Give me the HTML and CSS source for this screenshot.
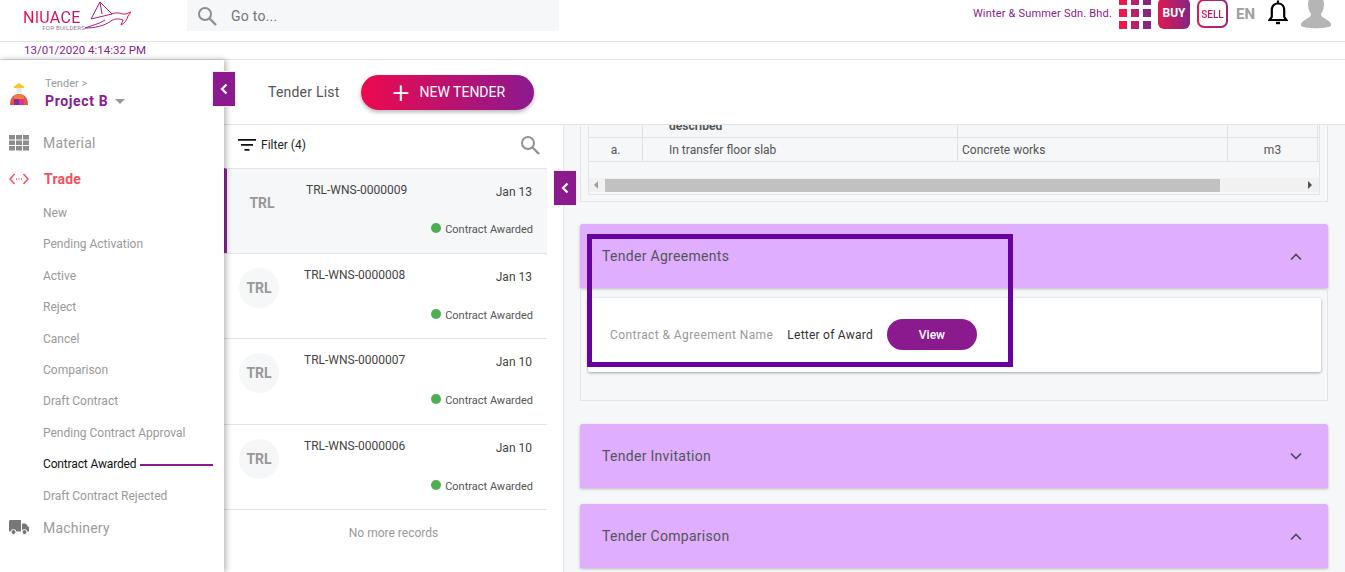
FILE: index.html
```html
<!DOCTYPE html>
<html>
<head>
<meta charset="utf-8" />
<title>Tender List</title>
<link rel="stylesheet" href="styles.css">
</head>
<body>

<header class="topbar">
  <div class="logo">
    <div class="logo-words">
      <span class="logo-name">NIUACE</span>
      <span class="logo-sub">FOR BUILDERS</span>
    </div>
    <svg class="logo-mark" width="46" height="30" viewBox="0 0 46 30" fill="none">
      <defs>
        <linearGradient id="logoGrad" x1="0" x2="1" y1="0" y2="0">
          <stop offset="0" stop-color="#8b1a8f"/>
          <stop offset=".5" stop-color="#b01a70"/>
          <stop offset="1" stop-color="#e8114f"/>
        </linearGradient>
      </defs>
      <path d="M6 19 L15 2 L27 14 L6 19 M15 2 L17 14 M27 14 C33 11 37 15 41 14 L46 12 L43 16 C42 20 40 23 36 25 L38 20 C33 18 29 19 26 21 C19 26 10 28 0 28 C8 25 14 24 20 20" stroke="url(#logoGrad)" stroke-width="1"/>
    </svg>
  </div>
  <div class="goto">
    <svg width="24" height="24" viewBox="0 0 24 24" fill="none" stroke="#8a8f94" stroke-width="2"><circle cx="10" cy="10" r="6"/><path d="M14.500 14.500 21 21" stroke-width="2.400"/></svg>
    <span>Go to...</span>
  </div>
  <div class="top-right">
    <span class="company">Winter &amp; Summer Sdn. Bhd.</span>
    <div class="apps">
      <i class="c1"></i><i class="c2"></i><i class="c3"></i>
      <i class="c1"></i><i class="c2"></i><i class="c3"></i>
      <i class="c1"></i><i class="c2"></i><i class="c3"></i>
    </div>
    <span class="buy">BUY</span>
    <span class="sell"><b><em>SELL</em></b></span>
    <span class="lang">EN</span>
    <svg class="bell" width="20" height="25" viewBox="0 0 20 25" fill="none" stroke="#000" stroke-width="2.200">
      <path d="M1.500 20h17l-2.300-3V10c0-3.800-2.400-6.500-6.200-6.500S3.800 6.200 3.800 10v7z"/>
      <path d="M10 .5v3" />
      <path d="M8 23h4" stroke-width="2.400"/>
    </svg>
    <svg class="avatar" width="30" height="29" viewBox="0 0 30 29" fill="#b5b5b5">
      <path d="M15 -4c-5 0-8 3-8 8 0 4 1 7 3 10 0 2-1 3-3 4-3 2-6 3-7 6v2c5 3 25 3 30 0v-2c-1-3-4-4-7-6-2-1-3-2-3-4 2-3 3-6 3-10 0-5-3-8-8-8z"/>
    </svg>
  </div>
</header>

<div class="datebar">13/01/2020 4:14:32 PM</div>

<div class="app">
  <aside class="sidebar">
    <button class="collapse side-collapse"><svg width="10" height="12" viewBox="0 0 10 12"><path d="M7.500 1.500 3 6l4.500 4.500" fill="none" stroke="#fff" stroke-width="2.200"/></svg></button>
    <div class="project">
      <svg class="project-icon" width="18" height="22" viewBox="0 0 18 22">
        <rect x="6.500" y="5" width="5" height="5" fill="#efe3da"/>
        <path d="M9 0 4 3.500V5h10V3.500z" fill="#f7c531"/>
        <path d="M0 22C0 15 3 11 9 11s9 4 9 11z" fill="#e2574c"/>
        <path d="M4 12.500C6 11.300 12 11.300 14 12.500V16H4z" fill="#ef7d3c"/>
        <rect x="4" y="16" width="5" height="6" fill="#8b2a8f"/>
        <rect x="9" y="16" width="5" height="6" fill="#cf3a96"/>
      </svg>
      <div>
        <div class="crumb">Tender &gt;</div>
        <div class="project-name">Project B <span class="caret"></span></div>
      </div>
    </div>
    <nav class="nav">
      <a class="nav-main">
        <svg width="20" height="16" viewBox="0 0 20 16" fill="#8c8c8c"><path d="M0 0h6v4.500H0zM7 0h6v4.500H7zM14 0h6v4.500h-6zM0 5.500h6V10H0zM7 5.500h6V10H7zM14 5.500h6V10h-6zM0 11h6v4.500H0zM7 11h6v4.500H7zM14 11h6v4.500h-6z"/></svg>
        Material
      </a>
      <a class="nav-main trade">
        <svg width="20" height="12" viewBox="0 0 20 12" fill="none" stroke="#f4505f" stroke-width="1.500"><path d="M5.500 1 1 6l4.500 5M14.500 1 19 6l-4.500 5"/><path d="M7 6h1M9.500 6h1M12 6h1"/></svg>
        Trade
      </a>
      <div class="subnav">
        <a>New</a>
        <a>Pending Activation</a>
        <a>Active</a>
        <a>Reject</a>
        <a>Cancel</a>
        <a>Comparison</a>
        <a>Draft Contract</a>
        <a>Pending Contract Approval</a>
        <a class="current">Contract Awarded</a>
        <a>Draft Contract Rejected</a>
      </div>
      <a class="nav-main">
        <svg width="20" height="15" viewBox="0 0 20 15" fill="#777"><path d="M0 1.500C0 .7.700 0 1.500 0H12v11.500H0zM13 3.500h3.500L20 7.500v4h-7z"/><circle cx="4.500" cy="12" r="2.500" stroke="#fff"/><circle cx="15.500" cy="12" r="2.500" stroke="#fff"/></svg>
        Machinery
      </a>
    </nav>
  </aside>

  <main class="main">
    <div class="main-head">
      <span class="main-title">Tender List</span>
      <button class="new-tender"><span class="plus">+</span><span class="new-label">NEW TENDER</span></button>
    </div>
    <div class="panes">
      <section class="list">
        <button class="collapse list-collapse"><svg width="10" height="12" viewBox="0 0 10 12"><path d="M7.500 1.500 3 6l4.500 4.500" fill="none" stroke="#fff" stroke-width="2.200"/></svg></button>
        <div class="filter">
          <svg width="18" height="14" viewBox="0 0 18 14" fill="#111"><path d="M0 1h18v1.700H0zM3 6h12v1.700H3zM6.500 11h5v1.700h-5z"/></svg>
          <span>Filter (4)</span>
          <svg class="filter-search" width="24" height="24" viewBox="0 0 24 24" fill="none" stroke="#8f9499" stroke-width="2"><circle cx="10" cy="10" r="6"/><path d="M14.500 14.500 21 21" stroke-width="2.400"/></svg>
        </div>
        <div class="row selected">
          <span class="badge">TRL</span>
          <span class="ref">TRL-WNS-0000009</span>
          <span class="date">Jan 13</span>
          <span class="status">Contract Awarded</span>
        </div>
        <div class="row">
          <span class="badge">TRL</span>
          <span class="ref">TRL-WNS-0000008</span>
          <span class="date">Jan 13</span>
          <span class="status">Contract Awarded</span>
        </div>
        <div class="row">
          <span class="badge">TRL</span>
          <span class="ref">TRL-WNS-0000007</span>
          <span class="date">Jan 10</span>
          <span class="status">Contract Awarded</span>
        </div>
        <div class="row row-last">
          <span class="badge">TRL</span>
          <span class="ref">TRL-WNS-0000006</span>
          <span class="date">Jan 10</span>
          <span class="status">Contract Awarded</span>
        </div>
        <div class="no-more">No more records</div>
      </section>

      <section class="detail">
        <div class="table-panel">
          <div class="table-box">
            <div class="t-row t-cut">
              <div class="c-no"></div><div class="c-desc"><b>described</b></div><div class="c-trade"></div><div class="c-unit"></div><div class="c-end"></div>
            </div>
            <div class="t-row">
              <div class="c-no">a.</div><div class="c-desc">In transfer floor slab</div><div class="c-trade">Concrete works</div><div class="c-unit">m3</div><div class="c-end"></div>
            </div>
            <div class="t-gap"></div>
            <div class="scrollbar">
              <span class="arrow-l"></span>
              <div class="thumb"></div>
              <span class="arrow-r"></span>
            </div>
          </div>
        </div>

        <div class="acc-head">
          <span>Tender Agreements</span>
          <svg width="14" height="9" viewBox="0 0 14 9"><path d="M2 7.500l5-5 5 5" fill="none" stroke="#4a4a4a" stroke-width="1.600"/></svg>
        </div>
        <div class="acc-body">
          <div class="agreement">
            <span class="agree-label">Contract &amp; Agreement Name</span>
            <span class="agree-value">Letter of Award</span>
            <button class="view">View</button>
          </div>
        </div>
        <div class="highlight"></div>

        <div class="acc-head acc-gap">
          <span>Tender Invitation</span>
          <svg width="14" height="9" viewBox="0 0 14 9"><path d="M2 1.500l5 5 5-5" fill="none" stroke="#4a4a4a" stroke-width="1.600"/></svg>
        </div>
        <div class="acc-head acc-gap-sm">
          <span>Tender Comparison</span>
          <svg width="14" height="9" viewBox="0 0 14 9"><path d="M2 7.500l5-5 5 5" fill="none" stroke="#4a4a4a" stroke-width="1.600"/></svg>
        </div>
      </section>
    </div>
  </main>
</div>

</body>
</html>
```

FILE: styles.css
```css
html, body {
  margin: 0;
  padding: 0;
  height: 572px;
  overflow: hidden;
  background: #fff;
  font-family: Roboto, "Liberation Sans", sans-serif;
  color: #444;
}
a { display: block; }
button { font-family: inherit; border: 0; cursor: pointer; padding: 0; }

/* top bar */
.topbar {
  display: flex;
  align-items: flex-start;
  height: 41px;
  border-bottom: 1px solid #e2e2e2;
}
.logo {
  display: flex;
  align-items: flex-start;
  width: 187px;
  padding-left: 23px;
  box-sizing: border-box;
}
.logo-words {
  display: flex;
  flex-direction: column;
  align-items: flex-end;
  width: 62px;
  padding-top: 10px;
}
.logo-name {
  width: 62px;
  font-size: 16px;
  font-weight: 400;
  line-height: 15px;
  letter-spacing: .3px;
  white-space: nowrap;
  color: #e0144f;
  background: linear-gradient(90deg, #e8114f, #e8114f 45%, #a01a80 70%, #d01a60);
  -webkit-background-clip: text;
  background-clip: text;
  -webkit-text-fill-color: transparent;
}
.logo-sub {
  font-size: 6px;
  line-height: 6px;
  letter-spacing: .25px;
  white-space: nowrap;
  color: #8b7a8f;
}
.logo-mark { flex: none; margin-top: 0; }
.goto {
  display: flex;
  align-items: center;
  gap: 12px;
  width: 372px;
  height: 31px;
  padding-left: 8px;
  box-sizing: border-box;
  background: #f6f7f9;
  font-size: 14px;
  letter-spacing: .25px;
  color: #757575;
}
.top-right {
  margin-left: auto;
  display: flex;
  align-items: flex-start;
  padding-right: 14px;
}
.company {
  margin: 7px 7px 0 0;
  font-size: 11px;
  line-height: 13px;
  letter-spacing: .18px;
  color: #8b1a8f;
}
.apps {
  display: grid;
  grid-template-columns: repeat(3, 8px);
  grid-auto-rows: 8px;
  gap: 4px;
  margin-top: -3px;
}
.apps i.c1 { background: #e91a4c; }
.apps i.c2 { background: #b82068; }
.apps i.c3 { background: #862682; }
.buy {
  width: 32px;
  height: 31px;
  margin: -2px 0 0 7px;
  border-radius: 6px;
  background: linear-gradient(90deg, #e01a50, #842484);
  color: #fff;
  font-size: 12px;
  font-weight: 700;
  line-height: 30px;
  text-align: center;
}
.sell {
  width: 31px;
  height: 29px;
  margin: -1px 0 0 7px;
  padding: 2px;
  box-sizing: border-box;
  border-radius: 7px;
  background: linear-gradient(90deg, #e01a50, #942484);
}
.sell b {
  display: block;
  height: 100%;
  border-radius: 5px;
  background: #fff;
  font-size: 10px;
  font-weight: 500;
  line-height: 27px;
  text-align: center;
}
.sell em {
  font-style: normal;
  color: #c01c68;
  background: linear-gradient(90deg, #e01a50, #842484);
  -webkit-background-clip: text;
  background-clip: text;
  -webkit-text-fill-color: transparent;
}
.lang {
  width: 21px;
  margin: 6px 0 0 8px;
  font-size: 15px;
  font-weight: 700;
  line-height: 16px;
  color: #a0a0a0;
}
.bell { margin: 0 0 0 11px; }
.avatar { margin: 0 0 0 13px; }

.datebar {
  height: 17px;
  padding-left: 24px;
  border-bottom: 1px solid #e2e2e2;
  font-size: 11.500px;
  line-height: 17px;
  color: #8b1a8f;
}

.app {
  display: flex;
  height: 512px;
}

/* left nav */
.sidebar {
  position: relative;
  z-index: 3;
  flex: 0 0 224px;
  background: #fff;
  box-shadow: 2px 0 6px rgba(0,0,0,.3);
}
.collapse {
  position: absolute;
  z-index: 5;
  display: flex;
  align-items: center;
  justify-content: center;
  width: 22px;
  height: 34px;
  background: #8b1a8f;
  box-shadow: 0 0 0 1px #eee;
}
.side-collapse { left: 213px; top: 12px; }
.project {
  display: flex;
  align-items: flex-end;
  gap: 17px;
  height: 50px;
  padding: 0 0 0 10px;
}
.project-icon { flex: none; margin-bottom: 5px; }
.crumb {
  font-size: 11px;
  line-height: 14px;
  color: #999;
}
.project-name {
  margin-top: 1px;
  font-size: 14px;
  font-weight: 700;
  line-height: 18px;
  letter-spacing: .65px;
  color: #8b1a8f;
}
.caret {
  display: inline-block;
  margin-left: 3px;
  vertical-align: 2px;
  border-top: 5px solid #999;
  border-left: 5px solid transparent;
  border-right: 5px solid transparent;
}
.nav { padding-top: 22px; }
.nav-main {
  display: flex;
  align-items: center;
  gap: 14px;
  height: 22px;
  padding-left: 9px;
  font-size: 14px;
  letter-spacing: .2px;
  color: #9a9a9a;
}
.nav-main svg { flex: 0 0 20px; }
.trade {
  margin-top: 14px;
  gap: 15px;
  font-weight: 700;
  color: #f4505f;
}
.subnav {
  padding: 8px 0 5px 43px;
}
.subnav a {
  height: 31.400px;
  font-size: 12px;
  line-height: 31.400px;
  color: #999;
}
.subnav .current {
  display: flex;
  align-items: center;
  gap: 4px;
  margin-right: 11px;
  letter-spacing: -.15px;
  color: #111;
}
.subnav .current::after {
  content: "";
  flex: 1;
  height: 2px;
  background: #8b1a8f;
}

/* main */
.main {
  flex: 1;
  display: flex;
  flex-direction: column;
  min-width: 0;
}
.main-head {
  display: flex;
  align-items: center;
  gap: 21px;
  height: 64px;
  padding: 0 0 0 44px;
  border-bottom: 1px solid #dfe2e6;
}
.main-title {
  font-size: 14px;
  letter-spacing: .22px;
  color: #555;
}
.new-tender {
  display: flex;
  align-items: center;
  gap: 10px;
  width: 173px;
  height: 35px;
  margin-top: 1px;
  padding-left: 32px;
  box-sizing: border-box;
  border-radius: 18px;
  background: linear-gradient(90deg, #ec0a4e, #8b1a8f);
  box-shadow: 0 2px 4px rgba(0,0,0,.3);
  color: #fff;
  font-size: 14px;
}
.plus {
  font-size: 30px;
  font-weight: 300;
  line-height: 30px;
}
.new-label { margin-top: -2px; }
.panes {
  flex: 1;
  display: flex;
  min-height: 0;
}

/* tender list */
.list {
  position: relative;
  flex: 0 0 340px;
  box-sizing: border-box;
  padding-right: 16px;
  border-right: 1px solid #e6e6e6;
  background: #fff;
}
.list-collapse { left: 330px; top: 46px; }
.filter {
  display: flex;
  align-items: center;
  gap: 5px;
  height: 43px;
  box-sizing: border-box;
  margin-right: -16px;
  padding: 0 21px 3px 14px;
  font-size: 12px;
  color: #222;
}
.filter-search { margin-left: auto; }
.row {
  position: relative;
  height: 85.200px;
  box-sizing: border-box;
  border-top: 1px solid #e2e4e8;
  font-size: 12px;
}
.row-last { height: 86.200px; border-bottom: 1px solid #e2e4e8; }
.row.selected {
  border-left: 3px solid #8b2a92;
  background: #f6f7f9;
}
.row.selected .badge { background: none; left: 15px; }
.row.selected .ref { left: 79px; }
.row.selected .status { top: 54px; }
.badge {
  position: absolute;
  left: 15px;
  top: 14px;
  width: 40px;
  height: 40px;
  border-radius: 50%;
  background: #f6f7f9;
  color: #999;
  font-size: 14px;
  font-weight: 700;
  line-height: 40px;
  text-align: center;
}
.ref {
  position: absolute;
  left: 80px;
  top: 14px;
  color: #444;
}
.date {
  position: absolute;
  right: 15px;
  top: 16px;
  color: #444;
}
.status {
  position: absolute;
  right: 14px;
  top: 55px;
  font-size: 11px;
  line-height: 14px;
  color: #555;
}
.status::before {
  content: "";
  display: inline-block;
  width: 10px;
  height: 10px;
  margin-right: 4px;
  border-radius: 50%;
  background: #4caf50;
}
.no-more {
  margin-right: -16px;
  padding-top: 16px;
  text-align: center;
  font-size: 12px;
  color: #999;
}

/* detail pane */
.detail {
  position: relative;
  flex: 1;
  min-width: 0;
  padding: 0 16px 0 15px;
  background: #f6f7f9;
  overflow: hidden;
}
.table-panel {
  height: 76px;
  margin: 0 1px;
  padding: 0 7px;
  border: 1px solid #e3e4e8;
  border-top: 0;
}
.table-box {
  height: 69px;
  border: 1px solid #e3e4e8;
  border-top: 0;
  overflow: hidden;
  font-size: 12px;
  color: #555;
}
.t-row {
  display: flex;
  height: 23px;
  border-bottom: 1px solid #e0e2e6;
  line-height: 24px;
}
.t-cut { height: 12px; line-height: 2px; }
.t-row > div { border-right: 1px solid #e0e2e6; box-sizing: border-box; }
.c-no { flex: 0 0 54px; text-align: center; }
.c-desc { flex: 0 0 315px; padding-left: 26px; }
.c-trade { flex: 0 0 270px; padding-left: 4px; }
.c-unit { flex: 0 0 90px; text-align: center; }
.c-end { flex: 1; border-right: 0 !important; }
.t-gap { height: 16px; }
.scrollbar {
  display: flex;
  align-items: center;
  height: 14px;
  background: #f1f1f1;
}
.thumb {
  width: 615px;
  height: 13px;
  margin-left: 7px;
  background: #c1c1c1;
}
.arrow-l, .arrow-r {
  width: 0;
  height: 0;
  border-top: 4px solid transparent;
  border-bottom: 4px solid transparent;
}
.arrow-l { margin-left: 5px; border-right: 4px solid #a0a0a0; }
.arrow-r { margin-left: auto; margin-right: 7px; border-left: 4px solid #505050; }
.acc-head {
  display: flex;
  align-items: center;
  justify-content: space-between;
  height: 64px;
  margin: 22px 1px 0;
  padding: 0 25px 0 22px;
  border-radius: 3px 3px 0 0;
  background: #dfaeff;
  box-shadow: 0 1px 3px rgba(0,0,0,.25);
  font-size: 14px;
  letter-spacing: .3px;
  color: #555;
}
.acc-head span { margin-top: -1px; }
.acc-gap { margin-top: 23px; }
.acc-gap-sm { margin-top: 16px; }
.acc-body {
  height: 113px;
  margin: 0 1px;
  padding: 10px 6px 0 7px;
  box-sizing: border-box;
  border: 1px solid #e3e4e8;
  border-top: 0;
}
.agreement {
  display: flex;
  align-items: center;
  height: 74px;
  box-sizing: border-box;
  padding: 0 0 2px 22px;
  border-radius: 2px;
  background: #fff;
  box-shadow: 0 1px 3px rgba(0,0,0,.35);
  font-size: 12px;
}
.agree-label { margin-top: 2px; color: #999; letter-spacing: .42px; }
.agree-value { margin: 2px 0 0 14px; color: #333; letter-spacing: .24px; }
.view {
  width: 90px;
  height: 31px;
  margin-left: 14px;
  padding-top: 2px;
  border-radius: 16px;
  background: #8b1a8f;
  color: #fff;
  font-size: 12px;
  font-weight: 500;
}
.highlight {
  position: absolute;
  left: 23px;
  top: 109px;
  width: 416px;
  height: 123px;
  border: 5px solid #6a00a0;
}
```
